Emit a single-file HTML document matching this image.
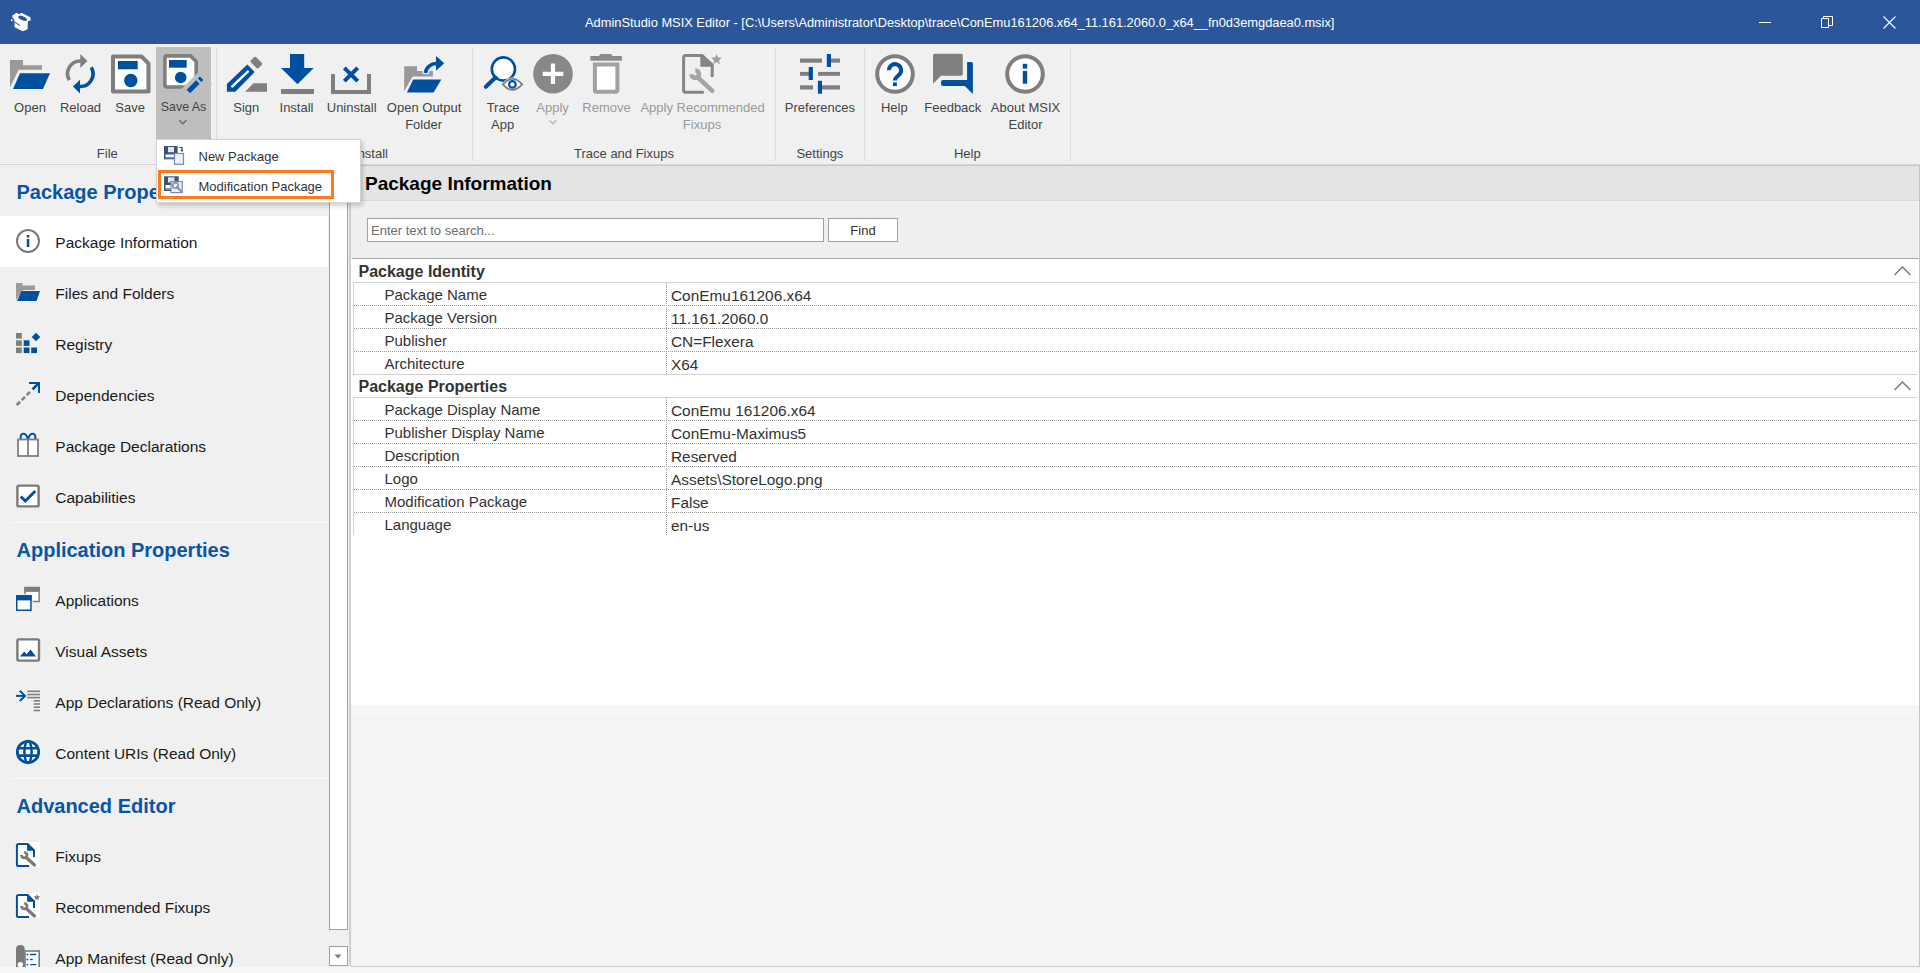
<!DOCTYPE html>
<html><head><meta charset="utf-8">
<style>
*{margin:0;padding:0;box-sizing:border-box}
html,body{width:1920px;height:973px;overflow:hidden;background:#f0f0f0;font-family:"Liberation Sans",sans-serif;position:relative}
.a{position:absolute}
.t{position:absolute;white-space:nowrap;line-height:1}
#title{left:0;top:0;width:1920px;height:44px;background:#2b579a}
#ribbon{left:0;top:44px;width:1920px;height:121px;background:#f0f0f0;border-bottom:1px solid #d5d5d5}
.rl{font-size:13px;color:#444;text-align:center}
.rd{color:#9a9a9a}
.gl{font-size:13px;color:#444}
.sep{position:absolute;width:1px;background:#dcdcdc;top:48px;height:113px}
#left{left:0;top:165px;width:329px;height:808px;background:#f0f0f0}
.li{font-size:15.5px;color:#1a1a1a}
.lh{font-size:20px;font-weight:bold;color:#0a55a3}
#right{left:352px;top:165px;width:1568px;height:801px;background:#f4f4f4}
.gr{font-size:15px;color:#333}
.gv{font-size:15.4px}
.gc{font-size:16px;font-weight:bold;color:#333}
</style></head><body>
<!-- title bar -->
<div id="title" class="a">
  <div class="t" style="left:585px;top:17px;font-size:12.85px;color:#fff">AdminStudio MSIX Editor - [C:\Users\Administrator\Desktop\trace\ConEmu161206.x64_11.161.2060.0_x64__fn0d3emgdaea0.msix]</div>
  <svg class="a" style="left:1740px;top:0" width="180" height="44">
   <path d="M19 22.5H31" stroke="#fff" stroke-width="1"/>
   <path d="M83.5 18.5H88.5V27.5H81.5V18.5Z" fill="none" stroke="#fff" stroke-width="1"/>
   <path d="M83.5 18.5V16.5H92.5V25.5H88.5" fill="none" stroke="#fff" stroke-width="1"/>
   <path d="M143.5 16.5L155.5 28.5M155.5 16.5L143.5 28.5" stroke="#fff" stroke-width="1.1"/>
  </svg>
  <svg class="a" style="left:0;top:0" width="44" height="44" viewBox="0 0 44 44">
   <path d="M12.3 15.5L16.5 12.8L19.2 14.2L21.5 12.7L30.3 17.3L30.8 20.2L27.9 21.3L27.6 29.3L22.8 31.2L14.6 27.3L14.4 19.8L12.5 17.5Z" fill="#fff"/>
   <ellipse cx="22.6" cy="18.3" rx="4.6" ry="1.9" transform="rotate(24 22.6 18.3)" fill="#2b579a"/>
   <path d="M12 20.2L19.8 25.5" stroke="#6f6f6f" stroke-width="1.1"/>
   <circle cx="11.7" cy="20.2" r="0.9" fill="#fff"/>
  </svg>
</div>
<!-- ribbon -->
<div id="ribbon" class="a"></div>
<div class="a" style="left:156px;top:47px;width:55px;height:92px;background:#bebebe"></div>
<div class="sep" style="left:216px"></div>
<div class="sep" style="left:472px"></div>
<div class="sep" style="left:775px"></div>
<div class="sep" style="left:864px"></div>
<div class="sep" style="left:1070px"></div>
<svg class="a" style="left:0;top:0" width="1100" height="165" viewBox="0 0 1100 165">
 <!-- Open -->
 <path d="M10 60H23V65.2H42V69.8H18.6L10 87.5Z" fill="#999"/>
 <path d="M20 73.2H50L43 89H13Z" fill="#0050a0"/>
 <!-- Reload -->
 <path d="M69.3 80.1A12.75 12.75 0 0 1 80.8 61" fill="none" stroke="#7f7f7f" stroke-width="3.6"/>
 <path d="M80.3 54L87.3 61L80.3 68Z" fill="#7f7f7f"/>
 <path d="M91.3 67.4A12.75 12.75 0 0 1 79.8 86.5" fill="none" stroke="#0050a0" stroke-width="3.6"/>
 <path d="M80 79.8L73 86.6L80 93.4Z" fill="#0050a0"/>
 <!-- Save -->
 <path d="M113 56.5H141.5L148.5 63.5V91.5H113Z" fill="#fff" stroke="#7f7f7f" stroke-width="4" stroke-linejoin="round"/>
 <rect x="118" y="61" width="19.7" height="8.3" fill="#0050a0"/>
 <circle cx="130.8" cy="80.5" r="6.7" fill="#0050a0"/>
 <!-- Save As -->
 <path d="M166.9 55.9H190.5L196.2 61.6V85Q196.2 87 194.2 87H166.9Q164.9 87 164.9 85V57.9Q164.9 55.9 166.9 55.9Z" fill="#fff" stroke="#7f7f7f" stroke-width="3.6"/>
 <rect x="169" y="60" width="17.7" height="7.7" fill="#0050a0"/>
 <circle cx="180.7" cy="77.5" r="5.8" fill="#0050a0"/>
 <path d="M199 71.5L182 88.5L195 101L212 84Z" fill="#bebebe"/>
 <path d="M186.65 89.65L190.15 93.15L199.65 83.65L196.15 80.15Z" fill="#0050a0"/>
 <path d="M197.8 78.5L201.3 82L203.4 79.9L199.9 76.4Z" fill="#0050a0"/>
 <!-- Sign -->
 <path d="M226.9 84.1L247.3 64.4L254.7 72L235.3 91.8H226.9Z" fill="#0050a0"/>
 <path d="M232.3 86.3L247.8 71.6" stroke="#fff" stroke-width="2.5" stroke-linecap="round"/>
 <rect x="250.9" y="58.9" width="10.9" height="7.4" rx="1.6" transform="rotate(45 256.35 62.6)" fill="#7f7f7f"/>
 <path d="M245 91.8L253.6 83.2H267V91.8Z" fill="#7f7f7f"/>
 <!-- Install -->
 <rect x="290" y="54" width="14.2" height="15" fill="#0050a0"/>
 <path d="M281 68H313.8L297.4 84.2Z" fill="#0050a0"/>
 <rect x="281" y="89" width="33" height="5" fill="#7f7f7f"/>
 <!-- Uninstall -->
 <path d="M333 74V92H369V74" fill="none" stroke="#7f7f7f" stroke-width="4"/>
 <path d="M344.3 67.8L357.7 81.2M357.7 67.8L344.3 81.2" stroke="#0050a0" stroke-width="4"/>
 <!-- Open Output Folder -->
 <path d="M404.2 66.2H417V71H432.9V76.5H412.6L404.2 91.3Z" fill="#999"/>
 <path d="M413.2 79.6H441.3L433.6 92.5H406.9Z" fill="#0050a0"/>
 <path d="M425.5 74C426 68 430 63.5 437 63.5" fill="none" stroke="#f0f0f0" stroke-width="6.5"/>
 <path d="M425.5 73C426 68 430 63.5 437 63.5" fill="none" stroke="#0050a0" stroke-width="3.6"/>
 <path d="M436 56L444.3 63.3L436 70.7Z" fill="#0050a0"/>
 <!-- Trace App -->
 <circle cx="503.4" cy="69" r="11.6" fill="#fff" stroke="#0050a0" stroke-width="2.6"/>
 <path d="M495.5 77.5L485.8 86.8" stroke="#0050a0" stroke-width="4" stroke-linecap="round"/>
 <path d="M501.2 84.4Q512.4 70.5 523.8 84.4Q512.4 98.3 501.2 84.4Z" fill="#f0f0f0"/>
 <path d="M502.8 84.4Q512.4 73.5 522.2 84.4Q512.4 95.3 502.8 84.4Z" fill="#fff" stroke="#7f7f7f" stroke-width="1.8"/>
 <circle cx="512.4" cy="84.4" r="3.3" fill="#fff" stroke="#0050a0" stroke-width="2.2"/>
 <!-- Apply (disabled) -->
 <circle cx="553" cy="73.8" r="19.8" fill="#888"/>
 <path d="M553 63.6V84M542.7 73.8H563.3" stroke="#fff" stroke-width="4.2"/>
 <!-- Remove -->
 <path d="M590.3 56H621.8V60.7H590.3Z" fill="#8a8a8a"/>
 <path d="M598.5 56.5L600.5 53.9H611L613 56.5Z" fill="#8a8a8a"/>
 <path d="M594.9 64.6H617.4V90.3Q617.4 91.7 616 91.7H596.3Q594.9 91.7 594.9 90.3Z" fill="#fff" stroke="#a2a2a2" stroke-width="4"/>
 <!-- Apply Recommended Fixups -->
 <path d="M712.2 77.1V65L702 55.6H685.6Q683.6 55.6 683.6 57.6V90.2Q683.6 92.2 685.6 92.2H703.8" fill="none" stroke="#858585" stroke-width="3"/>
 <path d="M700.3 54.1H702.5L713.7 65.3V66.7H700.3Z" fill="#858585"/>
 <path d="M716.5 53.9L718 57.6L721.9 57.8L718.9 60.4L719.9 64.2L716.5 62L713.1 64.2L714.1 60.4L711.1 57.8L715 57.6Z" fill="#a0a0a0"/>
 <path d="M699 78.5L712.3 90.8" stroke="#a5a5a5" stroke-width="4.5" stroke-linecap="round"/>
 <path d="M695.3 70.5A3.7 3.7 0 1 1 691.6 74.2" fill="none" stroke="#a5a5a5" stroke-width="4.6"/>
 <!-- Preferences -->
 <g fill="#7f7f7f">
  <rect x="800" y="58.5" width="22" height="4.2"/><rect x="831" y="58.5" width="9" height="4.2"/>
  <rect x="800" y="71.9" width="9" height="3.9"/><rect x="818.1" y="71.9" width="21.9" height="3.9"/>
  <rect x="800" y="85.3" width="13" height="4.2"/><rect x="822" y="85.3" width="18" height="4.2"/>
 </g>
 <g fill="#0050a0">
  <rect x="826.8" y="54" width="4.2" height="13"/>
  <rect x="808.7" y="67" width="4.2" height="13"/>
  <rect x="817.9" y="80.8" width="4.1" height="12.9"/>
 </g>
 <!-- Help -->
 <circle cx="895" cy="74" r="17.8" fill="#fff" stroke="#7f7f7f" stroke-width="4"/>
 <path d="M888.9 70.2A6.1 6.1 0 1 1 899.3 74.6L897.2 76.4Q894.9 78.3 894.9 80.5" fill="none" stroke="#0050a0" stroke-width="4"/>
 <rect x="892.9" y="82.4" width="4" height="3.7" fill="#0050a0"/>
 <!-- Feedback -->
 <path d="M935 53.8H961Q962.8 53.8 962.8 55.6V74Q962.8 75.8 961 75.8H941L933 83.8V55.6Q933 53.8 935 53.8Z" fill="#7f7f7f"/>
 <path d="M966.1 61H971.7Q973.9 61 973.9 63.2V95.2L964.4 87.1H942.7Q940 87.1 940 84.7V81.6Q940 79.1 942.7 79.1H966.1Z" fill="#f0f0f0"/>
 <path d="M967.1 62H971.3Q972.9 62 972.9 63.6V94.1L964.8 86.1H943Q941 86.1 941 84.1V82.1Q941 80.1 943 80.1H967.1Z" fill="#0050a0"/>
 <!-- About -->
 <circle cx="1025" cy="74" r="17.8" fill="#fff" stroke="#7f7f7f" stroke-width="4"/>
 <rect x="1022.8" y="63.8" width="4.4" height="4.8" fill="#0050a0"/>
 <rect x="1022.8" y="71" width="4.4" height="12.7" fill="#0050a0"/>
 <!-- Save As chevron / Apply chevron -->
 <path d="M179.3 120.3L182.8 123.8L186.3 120.3" fill="none" stroke="#6a6a6a" stroke-width="1.5"/>
 <path d="M549.7 120.5L553 123.8L556.3 120.5" fill="none" stroke="#b5b5b5" stroke-width="1.3"/>
</svg>
<div class="t rl" style="left:-70px;width:200px;top:100.7px">Open</div>
<div class="t rl" style="left:-19.5px;width:200px;top:100.7px">Reload</div>
<div class="t rl" style="left:30.2px;width:200px;top:100.7px">Save</div>
<div class="t rl" style="left:83.6px;width:200px;top:100.7px;font-size:12.4px;top:101.2px">Save As</div>
<div class="t rl" style="left:146.3px;width:200px;top:100.7px">Sign</div>
<div class="t rl" style="left:196.5px;width:200px;top:100.7px">Install</div>
<div class="t rl" style="left:251.7px;width:200px;top:100.7px">Uninstall</div>
<div class="t rl" style="left:324.1px;width:200px;top:100.7px">Open Output</div>
<div class="t rl" style="left:323.6px;width:200px;top:117.5px">Folder</div>
<div class="t rl" style="left:403px;width:200px;top:100.7px">Trace</div>
<div class="t rl" style="left:402.7px;width:200px;top:117.5px">App</div>
<div class="t rl rd" style="left:452.6px;width:200px;top:100.7px">Apply</div>
<div class="t rl rd" style="left:506.5px;width:200px;top:100.7px">Remove</div>
<div class="t rl rd" style="left:602.6px;width:200px;top:100.7px">Apply Recommended</div>
<div class="t rl rd" style="left:602px;width:200px;top:117.5px">Fixups</div>
<div class="t rl" style="left:719.9px;width:200px;top:100.7px">Preferences</div>
<div class="t rl" style="left:794.3px;width:200px;top:100.7px">Help</div>
<div class="t rl" style="left:852.8px;width:200px;top:100.7px">Feedback</div>
<div class="t rl" style="left:925.5px;width:200px;top:100.7px">About MSIX</div>
<div class="t rl" style="left:925.5px;width:200px;top:117.5px">Editor</div>
<div class="t rl" style="left:7.3px;width:200px;top:147.4px">File</div>
<div class="t gl" style="right:1532px;top:147.4px">Sign and Install</div>
<div class="t rl" style="left:524px;width:200px;top:147.4px">Trace and Fixups</div>
<div class="t rl" style="left:719.9px;width:200px;top:147.4px">Settings</div>
<div class="t rl" style="left:867.3px;width:200px;top:147.4px">Help</div>

<!-- left panel -->
<div id="left" class="a"></div>
<div class="a" style="left:0;top:216px;width:328px;height:51px;background:#fff"></div>
<div class="a" style="left:12px;top:522px;width:316px;height:1px;background:#fbfbfb"></div>
<div class="a" style="left:12px;top:778px;width:316px;height:1px;background:#fbfbfb"></div>
<div class="t lh" style="left:16.5px;top:181.9px">Package Properties</div>
<div class="t lh" style="left:16.5px;top:540.1px">Application Properties</div>
<div class="t lh" style="left:16.5px;top:796.1px">Advanced Editor</div>
<div class="t li" style="left:55.3px;top:234.7px">Package Information</div>
<div class="t li" style="left:55.3px;top:285.7px">Files and Folders</div>
<div class="t li" style="left:55.3px;top:336.7px">Registry</div>
<div class="t li" style="left:55.3px;top:387.7px">Dependencies</div>
<div class="t li" style="left:55.3px;top:438.7px">Package Declarations</div>
<div class="t li" style="left:55.3px;top:489.7px">Capabilities</div>
<div class="t li" style="left:55.3px;top:592.5px">Applications</div>
<div class="t li" style="left:55.3px;top:643.5px">Visual Assets</div>
<div class="t li" style="left:55.3px;top:694.5px">App Declarations (Read Only)</div>
<div class="t li" style="left:55.3px;top:745.5px">Content URIs (Read Only)</div>
<div class="t li" style="left:55.3px;top:848.5px">Fixups</div>
<div class="t li" style="left:55.3px;top:899.5px">Recommended Fixups</div>
<div class="t li" style="left:55.3px;top:950.5px">App Manifest (Read Only)</div>
<svg class="a" style="left:0;top:165px" width="60" height="808" viewBox="0 165 60 808">
 <!-- info -->
 <circle cx="28" cy="241" r="11" fill="#fff" stroke="#7a7a7a" stroke-width="2"/>
 <rect x="26.8" y="235" width="2.5" height="2.5" fill="#0050a0"/>
 <rect x="26.8" y="239" width="2.5" height="8" fill="#0050a0"/>
 <!-- files -->
 <path d="M16 283H22.5V285.5H35V290H23L16 300Z" fill="#9a9a9a"/>
 <path d="M21.5 291H40L36.5 301H17Z" fill="#0050a0"/>
 <!-- registry -->
 <g fill="#7f7f7f"><rect x="16" y="333" width="5.8" height="5.6"/><rect x="16" y="340.3" width="5.8" height="5.6"/><rect x="16" y="347.5" width="5.8" height="5.6"/></g>
 <g fill="#0050a0"><rect x="23.7" y="340.3" width="5.8" height="5.6"/><rect x="23.7" y="347.5" width="5.8" height="5.6"/><rect x="31.2" y="347.5" width="5.8" height="5.6"/>
 <path d="M36 332.7L40.3 337L36 341.3L31.7 337Z"/></g>
 <!-- dependencies -->
 <path d="M16.8 405L31 390.8" stroke="#7f7f7f" stroke-width="2.6" stroke-dasharray="4.6 2.4"/>
 <path d="M32.5 389.3L38.5 383.3" stroke="#0050a0" stroke-width="2.6"/>
 <path d="M29 383H39V393" fill="none" stroke="#0050a0" stroke-width="2"/>
 <!-- package declarations -->
 <rect x="18" y="439.5" width="20" height="16.5" fill="#fff" stroke="#7f7f7f" stroke-width="1.8"/>
 <path d="M28 439.5V456" stroke="#7f7f7f" stroke-width="1.8"/>
 <path d="M27.8 438.8C26 432 19.5 432 20.8 438.8M28.2 438.8C30 432 36.5 432 35.2 438.8" fill="none" stroke="#0050a0" stroke-width="2"/>
 <!-- capabilities -->
 <rect x="17.4" y="485.6" width="21.2" height="20.8" rx="1.5" fill="#fff" stroke="#7a7a7a" stroke-width="2.4"/>
 <path d="M20.8 496.5L25.3 501L35.3 491" fill="none" stroke="#0050a0" stroke-width="3"/>
 <!-- applications -->
 <rect x="25.05" y="587.6" width="14.1" height="13.9" fill="#fff" stroke="#7f7f7f" stroke-width="1.5"/>
 <rect x="24.3" y="586.9" width="15.5" height="5" fill="#7f7f7f"/>
 <rect x="15" y="594.2" width="17.7" height="17.8" fill="#f0f0f0"/>
 <rect x="16.75" y="595.95" width="14.2" height="14.3" fill="#fff" stroke="#0050a0" stroke-width="1.5"/>
 <rect x="16" y="595.2" width="15.7" height="5.2" fill="#0050a0"/>
 <!-- visual assets -->
 <rect x="17.4" y="639.4" width="21.6" height="21.2" rx="1.5" fill="#fff" stroke="#7a7a7a" stroke-width="2.4"/>
 <path d="M20 656.6L24.2 651.5L26.6 654.2L30.5 649.6L36 656.6Z" fill="#0050a0"/>
 <!-- app declarations -->
 <path d="M16 695.9H24.5" stroke="#0050a0" stroke-width="2"/>
 <path d="M19.8 690.8L25 695.9L19.8 701" fill="none" stroke="#0050a0" stroke-width="2"/>
 <g fill="#7f7f7f">
  <rect x="27.2" y="690.5" width="12.8" height="1.6"/><rect x="27.2" y="693.7" width="12.8" height="1.6"/><rect x="27.2" y="696.8" width="12.8" height="1.6"/>
  <rect x="33.7" y="700" width="6.3" height="1.6"/><rect x="33.7" y="703.2" width="6.3" height="1.6"/><rect x="33.7" y="706.4" width="6.3" height="1.6"/><rect x="33.7" y="709.7" width="6.3" height="1.6"/>
 </g>
 <!-- content uris globe -->
 <circle cx="28" cy="752" r="10.7" fill="#fff" stroke="#0050a0" stroke-width="2.8"/>
 <path d="M17.5 748.3H38.5M17.5 755.6H38.5" stroke="#0050a0" stroke-width="2.6"/>
 <ellipse cx="28" cy="752" rx="3.6" ry="11" fill="none" stroke="#0050a0" stroke-width="2.5"/>
 <!-- fixups -->
 <rect x="16" y="842" width="24" height="25" fill="#fff"/>
 <path d="M34 857V850.3L27.4 843.9H18.5Q16.9 843.9 16.9 845.5V864.4Q16.9 866 18.5 866H29" fill="none" stroke="#0050a0" stroke-width="2"/>
 <path d="M27.1 843H27.8L35 850.2V850.7H27.1Z" fill="#0050a0"/>
 <path d="M26.8 858L34.5 865" stroke="#7a7a7a" stroke-width="3.2" stroke-linecap="round"/>
 <path d="M24.2 852.3A2.8 2.8 0 1 1 21.4 855.1" fill="none" stroke="#7a7a7a" stroke-width="2.8"/>
 <!-- recommended fixups -->
 <rect x="16" y="893" width="24" height="25" fill="#fff"/>
 <path d="M34 908V901.3L27.4 894.9H18.5Q16.9 894.9 16.9 896.5V915.4Q16.9 917 18.5 917H29" fill="none" stroke="#0050a0" stroke-width="2"/>
 <path d="M27.1 894H27.8L35 901.2V901.7H27.1Z" fill="#0050a0"/>
 <path d="M26.8 909L34.5 916" stroke="#7a7a7a" stroke-width="3.2" stroke-linecap="round"/>
 <path d="M24.2 903.3A2.8 2.8 0 1 1 21.4 906.1" fill="none" stroke="#7a7a7a" stroke-width="2.8"/>
 <path d="M37 893.8L37.9 896.2L40.4 896.3L38.5 897.9L39.1 900.3L37 899L34.9 900.3L35.5 897.9L33.6 896.3L36.1 896.2Z" fill="#7a7a7a"/>
 <!-- app manifest -->
 <rect x="25" y="951" width="14.2" height="20" fill="#fff" stroke="#7a7a7a" stroke-width="1.6"/>
 <path d="M16 949Q16 945 20.3 945Q24.7 945 24.7 949V967H16Z" fill="#7a7a7a"/>
 <circle cx="20.3" cy="964.6" r="2.7" fill="#fff"/>
 <g fill="#0050a0"><circle cx="27.4" cy="954.5" r="0.9"/><rect x="30" y="953.8" width="6.4" height="1.4" rx="0.7"/><circle cx="27.4" cy="959.5" r="0.9"/><rect x="30" y="958.8" width="2.9" height="1.4" rx="0.7"/><circle cx="27.4" cy="964.6" r="0.9"/><rect x="30" y="963.9" width="6.4" height="1.4" rx="0.7"/></g>
</svg>
<!-- left scrollbar -->
<div class="a" style="left:328px;top:165px;width:21px;height:801px;background:#f0f0f0"></div>
<div class="a" style="left:329px;top:170px;width:19px;height:760px;background:#fff;border:1px solid #a0a0a0"></div>
<div class="a" style="left:329px;top:946px;width:19px;height:20px;background:#fff;border:1px solid #a0a0a0"></div>
<svg class="a" style="left:329px;top:946px" width="19" height="20"><path d="M5.5 8.5H12.5L9 12.5Z" fill="#7a7a7a"/></svg>
<div class="a" style="left:349px;top:165px;width:2px;height:801px;background:#cfcfcf"></div>

<!-- right panel -->
<div id="right" class="a"></div>
<div class="a" style="left:351px;top:165px;width:1568px;height:1px;background:#c9c9c9"></div>
<div class="a" style="left:351px;top:166px;width:1568px;height:34px;background:#e4e4e4"></div>
<div class="a" style="left:351px;top:200px;width:1568px;height:1px;background:#dadada"></div>
<div class="a" style="left:351px;top:201px;width:1568px;height:57px;background:#efefef"></div>
<div class="a" style="left:352px;top:258px;width:1567px;height:1px;background:#a9a9a9"></div>
<div class="a" style="left:351px;top:259px;width:1568px;height:446px;background:#fff"></div>
<div class="a" style="left:351px;top:705px;width:1568px;height:12px;background:#f6f6f6"></div>
<div class="a" style="left:351px;top:966px;width:1569px;height:1px;background:#c9c9c9"></div>
<div class="a" style="left:0;top:967px;width:1920px;height:6px;background:#f7f7f7"></div>
<div class="a" style="left:1919px;top:165px;width:1px;height:801px;background:#c4c4c4"></div>
<div class="a" style="left:1918px;top:201px;width:1px;height:57px;background:#fafafa"></div>
<div class="t" style="left:365px;top:174.1px;font-size:19px;font-weight:bold;color:#000">Package Information</div>
<div class="a" style="left:367px;top:218px;width:457px;height:24px;background:#fff;border:1px solid #a0a0a0"></div>
<div class="t" style="left:371px;top:223.8px;font-size:13px;color:#6d6d6d">Enter text to search...</div>
<div class="a" style="left:828px;top:218px;width:70px;height:24px;background:#fff;border:1px solid #a0a0a0"></div>
<div class="t" style="left:763px;width:200px;text-align:center;top:224px;font-size:13px;color:#333">Find</div>
<!-- grid -->
<svg class="a" style="left:351px;top:259px" width="1568" height="446" viewBox="351 259 1568 446">
 <g stroke="#d2d2d2" stroke-width="1">
  <path d="M353 282.5H1917M353 374.5H1917M353 397.5H1917"/>
  <path d="M353.5 282V374M353.5 397V535"/>
 </g>
 <g stroke="#9a9a9a" stroke-width="1" stroke-dasharray="1 1">
  <path d="M354 305.5H1917M354 328.5H1917M354 351.5H1917"/>
  <path d="M354 420.5H1917M354 443.5H1917M354 466.5H1917M354 489.5H1917M354 512.5H1917"/>
  <path d="M666.5 283V374M666.5 398V535"/>
 </g>
 <path d="M1894.5 275L1902.5 267L1910.5 275M1894.5 390L1902.5 382L1910.5 390" fill="none" stroke="#7a7a7a" stroke-width="1.5"/>
</svg>
<div class="t gc" style="left:358.5px;top:264.3px">Package Identity</div>
<div class="t gc" style="left:358.5px;top:379.3px">Package Properties</div>
<div class="t gr" style="left:384.5px;top:287.4px">Package Name</div>
<div class="t gr" style="left:384.5px;top:310.4px">Package Version</div>
<div class="t gr" style="left:384.5px;top:333.4px">Publisher</div>
<div class="t gr" style="left:384.5px;top:356.4px">Architecture</div>
<div class="t gr gv" style="left:671px;top:288.4px">ConEmu161206.x64</div>
<div class="t gr gv" style="left:671px;top:311.4px">11.161.2060.0</div>
<div class="t gr gv" style="left:671px;top:334.4px">CN=Flexera</div>
<div class="t gr gv" style="left:671px;top:357.4px">X64</div>
<div class="t gr" style="left:384.5px;top:402.4px">Package Display Name</div>
<div class="t gr" style="left:384.5px;top:425.4px">Publisher Display Name</div>
<div class="t gr" style="left:384.5px;top:448.4px">Description</div>
<div class="t gr" style="left:384.5px;top:471.4px">Logo</div>
<div class="t gr" style="left:384.5px;top:494.4px">Modification Package</div>
<div class="t gr" style="left:384.5px;top:517.4px">Language</div>
<div class="t gr gv" style="left:671px;top:403.4px">ConEmu 161206.x64</div>
<div class="t gr gv" style="left:671px;top:426.4px">ConEmu-Maximus5</div>
<div class="t gr gv" style="left:671px;top:449.4px">Reserved</div>
<div class="t gr gv" style="left:671px;top:472.4px">Assets\StoreLogo.png</div>
<div class="t gr gv" style="left:671px;top:495.4px">False</div>
<div class="t gr gv" style="left:671px;top:518.4px">en-us</div>

<!-- popup -->
<div class="a" style="left:156px;top:139px;width:205px;height:64px;background:#fff;border:1px solid #d4d4d4;box-shadow:2px 3px 4px rgba(0,0,0,0.18)"></div>
<div class="a" style="left:158px;top:170px;width:176px;height:29px;border:3px solid #ff7a1e"></div>
<div class="t" style="left:198.5px;top:149.8px;font-size:13px;color:#333">New Package</div>
<div class="t" style="left:198.5px;top:180.1px;font-size:13px;color:#333">Modification Package</div>
<svg class="a" style="left:160px;top:142px" width="30" height="56" viewBox="160 142 30 56">
 <rect x="164" y="146" width="13.6" height="13.3" fill="#3f5070"/>
 <rect x="168" y="147" width="6" height="5.2" fill="#dfe6f0"/>
 <rect x="165.5" y="154.5" width="10.5" height="2.5" fill="#fff"/>
 <rect x="165.5" y="157" width="10.5" height="1.5" fill="#5a8fd0"/>
 <rect x="174.5" y="153.5" width="9" height="10.8" fill="#eaf0f8" stroke="#7a86b4" stroke-width="1.2"/>
 <path d="M179.5 147.5H182V150.5" fill="none" stroke="#2d3a55" stroke-width="1.2"/>
 <path d="M180.5 150L182 152L183.5 150Z" fill="#2d3a55"/>
 <rect x="164" y="176.3" width="14.7" height="14.7" fill="#3f5070"/>
 <rect x="168" y="177.3" width="6.5" height="5.2" fill="#dfe6f0"/>
 <rect x="165.5" y="185" width="6" height="3.5" fill="#fff"/>
 <rect x="165.5" y="188.5" width="6" height="1.5" fill="#5a8fd0"/>
 <rect x="171" y="181.6" width="11.2" height="11" fill="#eaf0f8" stroke="#7a86b4" stroke-width="1.2"/>
 <path d="M177 187L181.5 191.5" stroke="#7d92b8" stroke-width="2.2" stroke-linecap="round"/>
 <circle cx="175.5" cy="185.5" r="2.8" fill="none" stroke="#7d92b8" stroke-width="1.6"/>
</svg>

</body></html>
